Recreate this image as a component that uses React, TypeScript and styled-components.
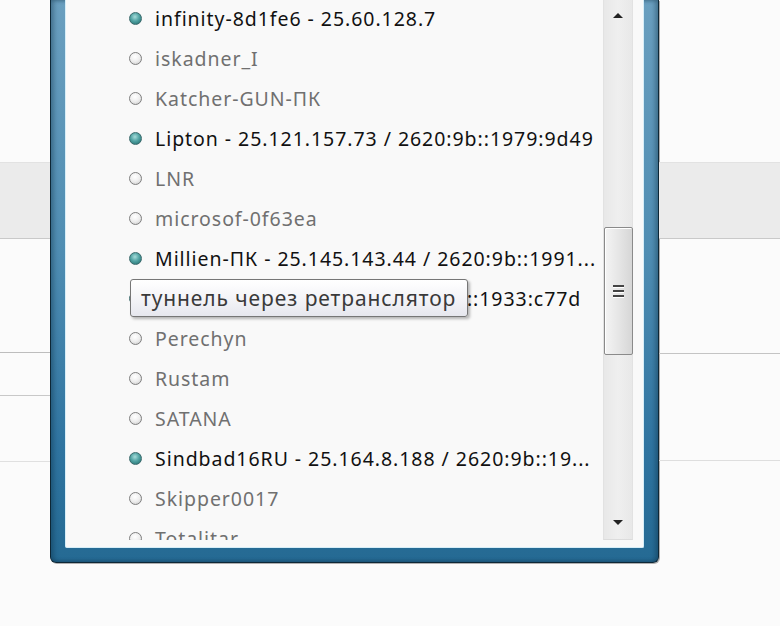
import React from 'react';
import styled, { createGlobalStyle } from 'styled-components';

const GlobalStyle = createGlobalStyle`
  html, body {
    margin: 0;
    padding: 0;
    background: #fbfbfb;
    overflow: hidden;
  }
  #root {
    width: 780px;
    height: 626px;
  }
`;

const Page = styled.div`
  width: 780px;
  height: 626px;
  display: grid;
  grid-template-columns: 50px 609px 1fr;
  background: #fbfbfb;
  font-family: 'Noto Sans', 'Open Sans', sans-serif;
`;

const Gutter = styled.div`
  display: flex;
  flex-direction: column;
`;

const Spacer = styled.div<{ $h: number }>`
  height: ${(p) => p.$h}px;
  flex: none;
`;

const Band = styled.div`
  height: 75px;
  flex: none;
  background: #ebebeb;
  border-top: 1px solid #e2e2e2;
  border-bottom: 1px solid #c9c9c9;
`;

const Rule = styled.div<{ $c?: string }>`
  height: 1px;
  flex: none;
  background: ${(p) => p.$c || '#c4c4c4'};
`;

const Frame = styled.div`
  align-self: start;
  height: 563px;
  box-sizing: border-box;
  border: 1px solid #0d2736;
  border-top: none;
  border-radius: 0 0 6px 6px;
  background: linear-gradient(180deg, #6a9fbf 0%, #4f8db2 45%, #2f74a0 80%, #256a93 100%);
  box-shadow: inset 3px 0 4px rgba(10, 40, 60, 0.35), inset -3px 0 4px rgba(10, 40, 60, 0.35),
    1px 1px 0 rgba(0, 0, 0, 0.3);
  padding: 0 14px 14px 14px;
`;

const Inner = styled.div`
  height: 100%;
  box-sizing: border-box;
  border: 1px solid #d6eef8;
  border-top: none;
  border-radius: 0 0 2px 2px;
  background: #f9f9f9;
  display: flex;
  padding: 0 10px 7px 0;
  position: relative;
  overflow: hidden;
`;

const List = styled.ul`
  flex: 1;
  margin: 0;
  padding: 0 0 0 63px;
  list-style: none;
  overflow: hidden;
`;

const Rows = styled.div`
  margin-top: -2px;
`;

const Row = styled.li<{ $on: boolean }>`
  height: 40px;
  display: flex;
  align-items: center;
  gap: 13px;
  font-size: 19.5px;
  letter-spacing: 0.95px;
  color: ${(p) => (p.$on ? '#111' : '#707070')};
  white-space: nowrap;
  overflow: hidden;
`;

const Dot = styled.span<{ $on: boolean }>`
  width: 13px;
  height: 13px;
  flex: none;
  border-radius: 50%;
  box-sizing: border-box;
  border: 1px solid ${(p) => (p.$on ? '#3b6a6c' : '#7e7e7e')};
  background: ${(p) =>
    p.$on
      ? 'radial-gradient(circle at 45% 35%, #a6dcda 0%, #52a4a4 45%, #1d6768 100%)'
      : 'radial-gradient(circle at 45% 35%, #ffffff 0%, #eeeeee 50%, #c6c6c6 100%)'};
`;

const Scrollbar = styled.div`
  width: 30px;
  flex: none;
  box-sizing: border-box;
  border-left: 1px solid #e2e2e2;
  border-right: 1px solid #e2e2e2;
  border-bottom: 1px solid #dcdcdc;
  background: linear-gradient(90deg, #e8e8e8, #efefef 50%, #e8e8e8);
  display: flex;
  flex-direction: column;
  align-items: center;
`;

const Arrow = styled.div<{ $up: boolean }>`
  width: 0;
  height: 0;
  flex: none;
  border-left: 5px solid transparent;
  border-right: 5px solid transparent;
  ${(p) =>
    p.$up ? 'border-bottom: 5px solid #222;' : 'border-top: 5px solid #222;'}
  margin: ${(p) => (p.$up ? '13px 0 0' : '0 0 14px')};
`;

const Track = styled.div`
  flex: 1;
  width: 100%;
  display: flex;
  flex-direction: column;
  align-items: center;
`;

const Thumb = styled.div`
  margin-top: 209px;
  width: 29px;
  height: 128px;
  box-sizing: border-box;
  border: 1px solid #8a8a8a;
  border-radius: 2px;
  background: linear-gradient(90deg, #f4f4f4 0%, #e6e6e6 50%, #d6d6d6 100%);
  box-shadow: inset 1px 1px 0 #fff;
  display: flex;
  flex-direction: column;
  align-items: center;
  justify-content: center;
  gap: 2px;
`;

const Grip = styled.span`
  width: 11px;
  height: 2px;
  background: #444;
  border-bottom: 1px solid #fff;
`;

const Tooltip = styled.div`
  position: absolute;
  left: 64px;
  top: 279px;
  width: 338px;
  height: 38px;
  box-sizing: border-box;
  border: 1px solid #767676;
  border-radius: 3px;
  background: linear-gradient(180deg, #ffffff 0%, #f2f2f6 60%, #e6e7ee 100%);
  box-shadow: 2px 2px 3px rgba(0, 0, 0, 0.28);
  padding: 0 10px;
  display: flex;
  align-items: center;
  font-size: 21px;
  letter-spacing: 0.9px;
  color: #3a3a3a;
  white-space: nowrap;
`;

const peers: { name: string; on: boolean }[] = [
  { name: 'infinity-8d1fe6 - 25.60.128.7', on: true },
  { name: 'iskadner_I', on: false },
  { name: 'Katcher-GUN-ПК', on: false },
  { name: 'Lipton - 25.121.157.73 / 2620:9b::1979:9d49', on: true },
  { name: 'LNR', on: false },
  { name: 'microsof-0f63ea', on: false },
  { name: 'Millien-ПК - 25.145.143.44 / 2620:9b::1991...', on: true },
  { name: 'Mr_Den - 25.18.20.93 / 2620:9b::1933:c77d', on: true },
  { name: 'Perechyn', on: false },
  { name: 'Rustam', on: false },
  { name: 'SATANA', on: false },
  { name: 'Sindbad16RU - 25.164.8.188 / 2620:9b::19...', on: true },
  { name: 'Skipper0017', on: false },
  { name: 'Totalitar', on: false },
];

export default function App() {
  return (
    <>
      <GlobalStyle />
      <Page>
        <Gutter>
          <Spacer $h={162} />
          <Band />
          <Spacer $h={113} />
          <Rule $c="#bdbdbd" />
          <Spacer $h={42} />
          <Rule $c="#c8c8c8" />
          <Spacer $h={65} />
          <Rule $c="#e0e0e0" />
        </Gutter>
        <Frame>
          <Inner>
            <List>
              <Rows>
                {peers.map((p) => (
                  <Row key={p.name} $on={p.on}>
                    <Dot $on={p.on} />
                    {p.name}
                  </Row>
                ))}
              </Rows>
            </List>
            <Scrollbar>
              <Arrow $up />
              <Track>
                <Thumb>
                  <Grip />
                  <Grip />
                  <Grip />
                </Thumb>
              </Track>
              <Arrow $up={false} />
            </Scrollbar>
            <Tooltip>туннель через ретранслятор</Tooltip>
          </Inner>
        </Frame>
        <Gutter>
          <Spacer $h={162} />
          <Band />
          <Spacer $h={114} />
          <Rule $c="#c4c4c4" />
          <Spacer $h={106} />
          <Rule $c="#dedede" />
        </Gutter>
      </Page>
    </>
  );
}
